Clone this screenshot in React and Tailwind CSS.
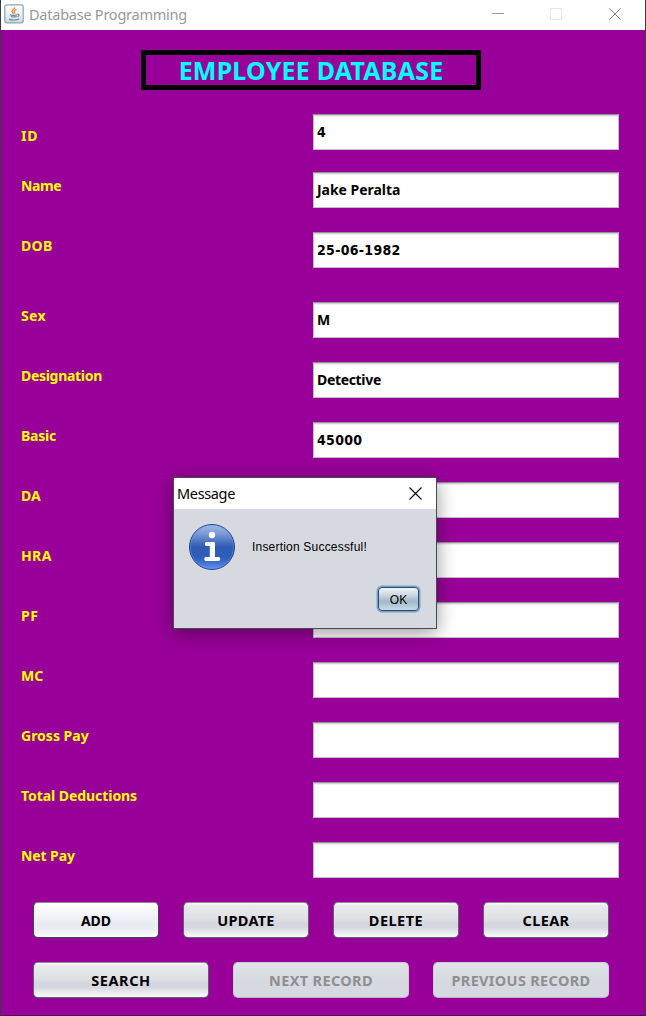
import React from "react";

const digits = "font-['DejaVu_Sans_Condensed','DejaVu_Sans',sans-serif] tracking-[0.3px]";

const rows = [
  { label: "ID", value: "4", lt: "tracking-[0.8px]", vt: digits, row: "h-[58px]", pad: "pt-3" },
  { label: "Name", value: "Jake Peralta", lt: "tracking-[-0.4px]", vt: "tracking-[-0.04px]", row: "h-[60px]", pad: "pt-1" },
  { label: "DOB", value: "25-06-1982", lt: "tracking-[0.3px]", vt: digits, row: "h-[70px]", pad: "pt-1" },
  { label: "Sex", value: "M", lt: "tracking-[0.3px]", row: "h-[60px]", pad: "pt-1" },
  { label: "Designation", value: "Detective", lt: "tracking-[-0.3px]", vt: "tracking-[-0.33px]", row: "h-[60px]", pad: "pt-1" },
  { label: "Basic", value: "45000", lt: "tracking-[-0.2px]", vt: digits, row: "h-[60px]", pad: "pt-1" },
  { label: "DA", value: "", lt: "tracking-[0px]", row: "h-[60px]", pad: "pt-1" },
  { label: "HRA", value: "", lt: "tracking-[0.4px]", row: "h-[60px]", pad: "pt-1" },
  { label: "PF", value: "", lt: "tracking-[0.5px]", row: "h-[60px]", pad: "pt-1" },
  { label: "MC", value: "", lt: "tracking-[0px]", row: "h-[60px]", pad: "pt-1" },
  { label: "Gross Pay", value: "", lt: "tracking-[0px]", row: "h-[60px]", pad: "pt-1" },
  { label: "Total Deductions", value: "", lt: "tracking-[-0.06px]", row: "h-[60px]", pad: "pt-1" },
  { label: "Net Pay", value: "", lt: "tracking-[-0.1px]", row: "h-[60px]", pad: "pt-1" },
];

function JavaIcon() {
  return (
    <svg className="h-5 w-5 shrink-0" viewBox="0 0 20 20" fill="none">
      <defs>
        <linearGradient id="jbg" x1="0" y1="0" x2="0" y2="1">
          <stop offset="0" stopColor="#ffffff" />
          <stop offset="0.5" stopColor="#eef1f4" />
          <stop offset="1" stopColor="#cfd8e0" />
        </linearGradient>
      </defs>
      <rect x="0.8" y="0.8" width="18.4" height="18" rx="2" fill="url(#jbg)" stroke="#8ba2b4" strokeWidth="1.2" />
      <path d="M10.600 3.200c.6 1.600-3 2.500-2.600 4.200.2.900 1 1.300 1.200 2.200M12.300 5.300c-1.900.9-2.600 1.600-2 2.600.5.700.3 1.200-.3 1.800" stroke="#ee8a3c" strokeWidth="1.3" />
      <path d="M6 10.800c1.600.6 5.200.6 7.200 0M7 12.600c1.600.5 4 .5 5.600 0M13.300 10.300c2.200-.5 2.400 1.700.2 2.500M5 15.200c2.300 1.200 7.700 1.200 10.200-.3" stroke="#5b829e" strokeWidth="1.1" />
    </svg>
  );
}

function Button({ children, className, kind = "normal" }) {
  const look = {
    normal:
      "border-[#5f626b] border-t-[#8d9098] text-black bg-[linear-gradient(#fbfbfc_0%,#e9eaed_8%,#dfe1e5_45%,#d4d7dd_60%,#d5d8de_72%,#f0f2f5_92%,#f6f8fa_100%)] shadow-[0_1px_0_#82128a]",
    hover:
      "border-[#3e4350] border-t-[#8d9098] text-black bg-[linear-gradient(#ffffff_0%,#f5f6f9_30%,#e8ebf2_62%,#e9ecf3_75%,#fdfdff_100%)] shadow-[0_1px_0_#82128a]",
    disabled:
      "border-[#c9cdd5] border-b-[#bbb3c8] text-[#8e8f91] bg-[linear-gradient(#dfe2e6_0%,#d6d9df_55%,#d6d9e2_100%)]",
  }[kind];
  return (
    <button
      disabled={kind === "disabled"}
      className={`flex h-9 items-center justify-center whitespace-nowrap rounded-[5px] border font-bold leading-5 ${look} ${className}`}
    >
      {children}
    </button>
  );
}

function InfoIcon() {
  return (
    <svg className="h-12 w-12 shrink-0" viewBox="0 0 48 48">
      <defs>
        <linearGradient id="info" x1="0" y1="0" x2="0" y2="1">
          <stop offset="0" stopColor="#a3bbe6" />
          <stop offset="0.2" stopColor="#7b9ad8" />
          <stop offset="0.5" stopColor="#2e5ab3" />
          <stop offset="0.75" stopColor="#2f5fbd" />
          <stop offset="1" stopColor="#5f90ec" />
        </linearGradient>
      </defs>
      <circle cx="24" cy="24" r="22.500" fill="url(#info)" stroke="#1d449c" />
      <circle cx="24" cy="24" r="21.500" fill="none" stroke="#7fa1e0" strokeOpacity="0.4" />
      <circle cx="24" cy="12" r="3.200" fill="#fff" />
      <path d="M18.300 19h7.400q1.300 0 1.300 1.300v13.700h3.700q1.500 0 1.500 2t-1.500 2H17.800q-1.500 0-1.500-2t1.500-2h4V23h-3.500q-1.400 0-1.400-2t1.400-2z" fill="#fff" />
    </svg>
  );
}

function MessageDialog() {
  return (
    <div className="absolute left-[172px] top-[477px] flex h-[152px] w-[264px] flex-col border border-[#4b4650] bg-[#d6d9df] shadow-[0_4px_18px_rgba(0,0,0,0.4)]">
      <div className="flex h-[31px] shrink-0 items-center justify-between bg-white pl-[3px] pr-[14px]">
        <span className="pb-px font-['Noto_Sans','Open_Sans',sans-serif] text-[14.5px] leading-5 tracking-[-0.35px] text-black">Message</span>
        <svg className="h-[13px] w-[13px]" viewBox="0 0 13 13" stroke="#000" strokeWidth="1.1">
          <path d="M.5.5l12 12M12.500.5l-12 12" />
        </svg>
      </div>
      <div className="flex h-[76px] items-center gap-4 pl-[14px]">
        <InfoIcon />
        <span className="whitespace-nowrap font-['Liberation_Sans',sans-serif] text-[12px] leading-4 tracking-[0.2px] text-black">Insertion Successful!</span>
      </div>
      <div className="flex justify-end pr-[17px] pt-[2px]">
        <button className="flex h-6 w-[41px] items-center justify-center rounded-[4px] border border-[#2f4a63] bg-[linear-gradient(#f0f3f6_0%,#cfd9e2_30%,#a6b9c9_58%,#a9bccd_68%,#c9dcee_100%)] pt-px font-['Liberation_Sans',sans-serif] text-[12px] leading-4 text-black shadow-[0_0_0_1.5px_#73a4d1]">
          OK
        </button>
      </div>
    </div>
  );
}

export default function App() {
  return (
    <div className="relative flex h-[1016px] w-[646px] flex-col overflow-hidden border-x border-b border-x-[#3b3a40] border-b-[#4a1550] bg-[#990099] font-['Noto_Sans','Open_Sans',sans-serif]">
      <header className="flex h-[30px] shrink-0 items-center bg-white pl-[3px]">
        <div className="pb-[2px]"><JavaIcon /></div>
        <span className="pb-[2px] pl-[5px] text-[14.5px] leading-5 tracking-[-0.24px] text-[#999]">Database Programming</span>
        <div className="ml-auto flex items-center gap-[46px] pb-[2px] pr-[24px]">
          <svg className="h-3 w-3" viewBox="0 0 12 12" stroke="#999"><path d="M0 5.500h12" /></svg>
          <svg className="h-3 w-3" viewBox="0 0 12 12" stroke="#e6e6e6" fill="none"><path d="M.5.5h11v11H.5z" /></svg>
          <svg className="ml-px h-3 w-3" viewBox="0 0 12 12" stroke="#888"><path d="M.3.3l11.400 11.400M11.700.3L.3 11.700" /></svg>
        </div>
      </header>
      <h1 className="ml-[140px] mt-5 flex h-10 w-[340px] shrink-0 items-center justify-center border-[5px] border-black text-[25px] font-bold leading-[30px] tracking-[0.2px] text-[#00ffff]">
        <span className="whitespace-nowrap pb-px">EMPLOYEE DATABASE</span>
      </h1>
      <main className="mt-6 flex flex-col">
        {rows.map((r) => (
          <div key={r.label} className={`flex items-start justify-between pl-5 pr-[26px] ${r.row}`}>
            <label className={`whitespace-nowrap text-[14px] font-bold leading-5 text-[#ffff00] ${r.pad}`}>
              <span className={r.lt}>{r.label}</span>
            </label>
            <div className="flex h-9 w-[306px] items-center border border-[#c0bec4] border-t-[#949198] bg-white pl-[3px] text-[14px] font-bold leading-5 text-black shadow-[inset_0_1px_0_#d3d3d3,inset_0_2px_0_#f0f0f0]">
              <span className={`whitespace-nowrap ${r.vt || ""}`}>{r.value}</span>
            </div>
          </div>
        ))}
      </main>
      <div className="flex gap-6 pl-8">
        <Button kind="hover" className="w-[126px] pt-px text-[14px]">ADD</Button>
        <Button className="w-[126px] pb-px text-[14.5px] tracking-[0.25px]">UPDATE</Button>
        <Button className="w-[126px] pb-px text-[14.5px] tracking-[0.5px]">DELETE</Button>
        <Button className="w-[126px] pb-px text-[14.5px] tracking-[0.35px]">CLEAR</Button>
      </div>
      <div className="mt-6 flex gap-6 pl-8">
        <Button className="w-44 pb-px text-[14.5px] tracking-[0.6px]">SEARCH</Button>
        <Button kind="disabled" className="w-44 pb-px text-[14.5px] tracking-[0.35px]">NEXT RECORD</Button>
        <Button kind="disabled" className="w-44 pb-px text-[14.5px] tracking-[0.32px]">PREVIOUS RECORD</Button>
      </div>
      <MessageDialog />
    </div>
  );
}
